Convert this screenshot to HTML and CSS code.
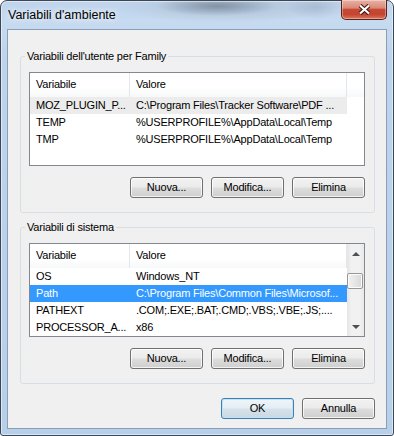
FILE: index.html
```html
<!DOCTYPE html>
<html>
<head>
<meta charset="utf-8">
<link rel="stylesheet" href="styles.css">
</head>
<body>
<div class="window">
  <div class="titlebar">
    <span class="title">Variabili d'ambiente</span>
    <div class="close">
      <svg width="13" height="11" viewBox="0 0 13 11">
        <path d="M2 1.5 L11 9.5 M11 1.5 L2 9.5" stroke="#3a1712" stroke-width="4.2" fill="none"/>
        <path d="M2 1.5 L11 9.5 M11 1.5 L2 9.5" stroke="#ffffff" stroke-width="2.2" fill="none"/>
      </svg>
    </div>
  </div>
  <div class="client">
    <fieldset class="group">
      <legend>Variabili dell'utente per Family</legend>
      <div class="list">
        <div class="table">
          <div class="header">
            <div class="hcell c1">Variabile</div>
            <div class="hcell c2">Valore</div>
          </div>
          <div class="row inactive-sel"><div class="cell c1">MOZ_PLUGIN_P...</div><div class="cell c2">C:\Program Files\Tracker Software\PDF ...</div></div>
          <div class="row"><div class="cell c1">TEMP</div><div class="cell c2">%USERPROFILE%\AppData\Local\Temp</div></div>
          <div class="row"><div class="cell c1">TMP</div><div class="cell c2">%USERPROFILE%\AppData\Local\Temp</div></div>
        </div>
      </div>
      <div class="buttons">
        <button class="btn">Nuova...</button>
        <button class="btn">Modifica...</button>
        <button class="btn">Elimina</button>
      </div>
    </fieldset>
    <fieldset class="group second">
      <legend>Variabili di sistema</legend>
      <div class="list">
        <div class="table">
          <div class="header">
            <div class="hcell c1">Variabile</div>
            <div class="hcell c2">Valore</div>
          </div>
          <div class="row"><div class="cell c1">OS</div><div class="cell c2">Windows_NT</div></div>
          <div class="row sel"><div class="cell c1">Path</div><div class="cell c2">C:\Program Files\Common Files\Microsof...</div></div>
          <div class="row"><div class="cell c1">PATHEXT</div><div class="cell c2">.COM;.EXE;.BAT;.CMD;.VBS;.VBE;.JS;....</div></div>
          <div class="row"><div class="cell c1">PROCESSOR_A...</div><div class="cell c2">x86</div></div>
        </div>
        <div class="vscroll">
          <div class="sb-btn"><span class="arrow up"></span></div>
          <div class="sb-track t1"></div>
          <div class="sb-thumb"></div>
          <div class="sb-track t2"></div>
          <div class="sb-btn"><span class="arrow down"></span></div>
        </div>
      </div>
      <div class="buttons">
        <button class="btn">Nuova...</button>
        <button class="btn">Modifica...</button>
        <button class="btn">Elimina</button>
      </div>
    </fieldset>
    <div class="dialog-buttons">
      <button class="btn default">OK</button>
      <button class="btn">Annulla</button>
    </div>
  </div>
</div>
</body>
</html>
```
FILE: styles.css
```css
* { box-sizing: border-box; }
html, body { margin: 0; padding: 0; }
body {
  width: 394px;
  height: 436px;
  overflow: hidden;
  background: #ffffff;
  font-family: "Liberation Sans", Arial, sans-serif;
  font-size: 11px;
  letter-spacing: -0.2px;
  color: #000;
}
.window {
  width: 394px;
  height: 436px;
  border: 1px solid #3b4757;
  border-radius: 7px 7px 3px 3px;
  display: flex;
  flex-direction: column;
  background:
    radial-gradient(ellipse 60px 10px at 215px 5px, rgba(95,110,128,0.55), rgba(95,110,128,0) 100%),
    radial-gradient(ellipse 110px 16px at 225px 6px, rgba(150,165,182,0.45), rgba(150,165,182,0) 100%),
    radial-gradient(ellipse 30px 12px at 315px 6px, rgba(140,155,175,0.4), rgba(140,155,175,0) 100%),
    linear-gradient(#bfd4ec 0px, #c6daf0 20px, #bed3ec 60px, #b8cfea 100%);
  box-shadow: inset 0 0 0 1px rgba(255,255,255,0.5);
}
.titlebar {
  height: 28px;
  flex: none;
  display: flex;
  align-items: flex-start;
  padding-left: 7px;
}
.title {
  margin-top: 7px;
  line-height: 15px;
  font-size: 12.5px;
  letter-spacing: 0;
  text-shadow: 0 0 6px rgba(255,255,255,0.9), 0 0 10px rgba(255,255,255,0.7);
}
.close {
  margin-left: auto;
  margin-right: 6px;
  margin-top: -1px;
  width: 46px;
  height: 20px;
  border: 1px solid #5a211c;
  border-top: none;
  border-radius: 0 0 5px 5px;
  background: linear-gradient(#eab1a3 0%, #d98a78 42%, #c84a34 50%, #c4432d 75%, #d9765d 100%);
  box-shadow: inset 0 0 0 1px rgba(255,255,255,0.35);
  display: flex;
  align-items: center;
  justify-content: center;
}
.client {
  flex: 1;
  margin: 0 6px 6px 6px;
  border: 1px solid #8a9eb8;
  background: #f0f0f0;
  display: flex;
  flex-direction: column;
}
.group {
  margin: 19px 11px 0 12px;
  padding: 8px 9px 14px 8px;
  border: 1px solid #d5dfe5;
  border-radius: 3px;
  min-inline-size: 0;
}
.group.second { margin-top: 7px; }
.group legend {
  padding: 0 2px;
  margin-left: -4px;
  line-height: 15px;
}
.list {
  height: 94px;
  border: 1px solid #828790;
  background: #fff;
  display: flex;
}
.table {
  flex: 1;
  min-width: 0;
}
.header {
  display: flex;
  height: 24px;
  background: linear-gradient(#ffffff 0%, #ffffff 60%, #f7f8f9 100%);
}
.hcell {
  line-height: 23px;
  padding-left: 6px;
  border-right: 1px solid #e3e6ea;
  white-space: nowrap;
  overflow: hidden;
}
.c1 { width: 100px; flex: none; }
.c2 { width: 217px; flex: none; }
.row {
  display: flex;
  width: 317px;
  height: 17px;
  line-height: 17px;
}
.cell {
  padding-left: 6px;
  white-space: nowrap;
  overflow: hidden;
}
.row.inactive-sel { background: #ececec; }
.row.sel { background: #3399ff; color: #fff; }
.vscroll {
  width: 17px;
  flex: none;
  display: flex;
  flex-direction: column;
  background: linear-gradient(to right, #e4e4e4 0%, #f1f1f1 25%, #f1f1f1 75%, #e9e9e9 100%);
}
.sb-btn {
  height: 17px;
  flex: none;
  display: flex;
  align-items: center;
  justify-content: center;
}
.arrow {
  width: 0;
  height: 0;
  border-left: 4px solid transparent;
  border-right: 4px solid transparent;
}
.arrow.up { border-bottom: 4px solid #4f4f4f; margin-top: 2px; }
.arrow.down { border-top: 4px solid #4f4f4f; margin-top: -2px; }
.sb-track.t1 { height: 12px; flex: none; }
.sb-track.t2 { flex: 1; }
.sb-thumb {
  height: 16px;
  flex: none;
  margin: 0 1px 0 0;
  border: 1px solid #979797;
  border-radius: 2px;
  background: linear-gradient(to right, #f2f2f2 0%, #e6e6e6 50%, #d8d8d8 100%);
  box-shadow: inset 0 0 0 1px #fbfbfb;
}
.buttons {
  margin-top: 11px;
  display: flex;
  justify-content: flex-end;
  gap: 8px;
}
.btn {
  width: 73px;
  height: 21px;
  padding: 0;
  font: inherit;
  letter-spacing: inherit;
  color: #000;
  border: 1px solid #707070;
  border-radius: 3px;
  background: linear-gradient(#f2f2f2 0%, #ebebeb 48%, #dddddd 52%, #cfcfcf 100%);
  box-shadow: inset 0 0 0 1px rgba(255,255,255,0.75);
  line-height: 19px;
  text-align: center;
}
.btn.default {
  border-color: #3c7fb1;
  box-shadow: inset 0 0 0 1px #bfe3f7;
  background: linear-gradient(#eef5fa 0%, #e5eef4 48%, #d6e2ea 52%, #cad8e2 100%);
}
.dialog-buttons {
  margin-top: 14px;
  padding-right: 11px;
  display: flex;
  justify-content: flex-end;
  gap: 8px;
}
```
